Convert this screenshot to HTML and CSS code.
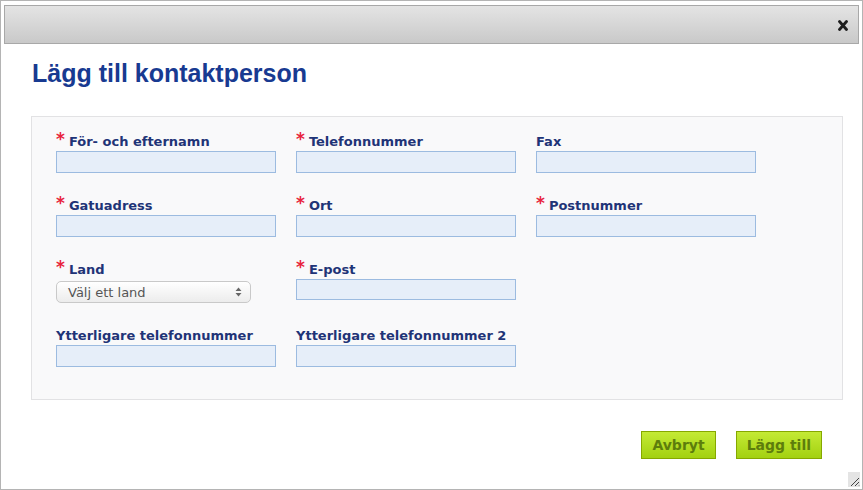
FILE: index.html
```html
<!DOCTYPE html>
<html lang="sv">
<head>
  <meta charset="UTF-8" />
  <title>Lägg till kontaktperson</title>
  <link rel="stylesheet" href="styles.css">
</head>
<body>
  <!-- Dialog -->
  <div class="dialog">
    <div class="titlebar">
      <button class="close" aria-label="Stäng">
        <svg width="10" height="11" viewBox="0 0 10 11"><path d="M1.5 1.5 L8.5 9.5 M8.5 1.5 L1.5 9.5" stroke="#1e1e1e" stroke-width="2.8" stroke-linecap="round"/></svg>
      </button>
    </div>

    <h2 class="dialog-title">Lägg till kontaktperson</h2>

    <form class="contact-form">
      <div class="field">
        <label><span class="req">*</span>För- och efternamn</label>
        <input type="text">
      </div>
      <div class="field">
        <label><span class="req">*</span>Telefonnummer</label>
        <input type="text">
      </div>
      <div class="field">
        <label>Fax</label>
        <input type="text">
      </div>

      <div class="field">
        <label><span class="req">*</span>Gatuadress</label>
        <input type="text">
      </div>
      <div class="field">
        <label><span class="req">*</span>Ort</label>
        <input type="text">
      </div>
      <div class="field">
        <label><span class="req">*</span>Postnummer</label>
        <input type="text">
      </div>

      <div class="field">
        <label><span class="req">*</span>Land</label>
        <div class="select">
          <span>Välj ett land</span>
          <svg width="7" height="10" viewBox="0 0 7 10"><path d="M3.5 0.5 L6.5 4 L0.5 4 Z M0.5 6 L6.5 6 L3.5 9.5 Z" fill="#666"/></svg>
        </div>
      </div>
      <div class="field">
        <label><span class="req">*</span>E-post</label>
        <input type="text" class="tight">
      </div>
      <div class="field"></div>

      <div class="field">
        <label>Ytterligare telefonnummer</label>
        <input type="text">
      </div>
      <div class="field">
        <label>Ytterligare telefonnummer 2</label>
        <input type="text">
      </div>
    </form>

    <div class="actions">
      <button class="btn">Avbryt</button>
      <button class="btn">Lägg till</button>
    </div>

    <div class="resize">
      <svg width="11" height="11" viewBox="0 0 11 11"><path d="M10 2 L2 10 M10 6 L6 10 M10 9.5 L9.5 10" stroke="#444" stroke-width="1"/></svg>
    </div>
  </div>
</body>
</html>
```

FILE: styles.css
```css
/* Base */
body {
  margin: 0;
  font-family: "DejaVu Sans", Verdana, sans-serif;
  background: #fff;
}

/* Dialog frame */
.dialog {
  position: relative;
  width: 863px;
  height: 490px;
  box-sizing: border-box;
  border: 1px solid #b4b4b4;
  background: #fff;
}
.titlebar {
  margin: 4px 3px 0 3px;
  height: 37px;
  border: 1px solid #a8a8a8;
  background: linear-gradient(to bottom, #e4e4e4, #c9c9c9);
  display: flex;
  justify-content: flex-end;
  align-items: center;
}
.close {
  border: none;
  background: none;
  padding: 0;
  margin: 2px 10px 0 0;
  display: flex;
  cursor: pointer;
}

.dialog-title {
  margin: 15px 0 0 31px;
  font-family: "Liberation Sans", Arial, sans-serif;
  font-size: 25px;
  font-weight: bold;
  color: #183a91;
  line-height: 28px;
}

/* Form panel */
.contact-form {
  margin: 29px 19px 0 30px;
  height: 284px;
  box-sizing: border-box;
  padding: 15px 24px 0 24px;
  background: #f9f9fa;
  border: 1px solid #e2e2e4;
  display: grid;
  grid-template-columns: 220px 220px 220px;
  column-gap: 20px;
  row-gap: 23px;
  align-content: start;
}
.field {
  display: flex;
  flex-direction: column;
}
.field label {
  display: block;
  height: 17px;
  margin-bottom: 2px;
  font-size: 13px;
  font-weight: bold;
  color: #1f3477;
  line-height: 20px;
  white-space: nowrap;
}
.req {
  color: #e8233d;
  font-size: 17px;
  line-height: 0;
  margin-right: 4px;
  position: relative;
  top: -1px;
}
.field input {
  height: 22px;
  box-sizing: border-box;
  margin: 0;
  border: 1px solid #9cbbe0;
  background: #e6eef9;
  border-radius: 0;
}
.field input.tight {
  height: 21px;
}

/* Country select */
.select {
  width: 195px;
  height: 22px;
  box-sizing: border-box;
  margin-top: 2px;
  padding: 0 8px 0 11px;
  border: 1px solid #c9c9c9;
  border-radius: 5px;
  background: linear-gradient(to bottom, #ffffff, #ececec);
  display: flex;
  align-items: center;
  justify-content: space-between;
  font-size: 13px;
  color: #555;
}

/* Buttons */
.actions {
  display: flex;
  justify-content: flex-end;
  gap: 20px;
  margin: 31px 40px 0 0;
}
.btn {
  height: 28px;
  padding: 0 10px;
  border: 1px solid #86a800;
  background: linear-gradient(to bottom, #c4ea35, #a3d111);
  font-family: "DejaVu Sans", Verdana, sans-serif;
  font-size: 14px;
  font-weight: bold;
  color: #5d7d0c;
  cursor: pointer;
}

/* Resize grip */
.resize {
  position: absolute;
  right: 2px;
  bottom: 2px;
  width: 12px;
  height: 15px;
  background: #e4e4e4;
  display: flex;
  align-items: flex-end;
  justify-content: flex-end;
}
```
